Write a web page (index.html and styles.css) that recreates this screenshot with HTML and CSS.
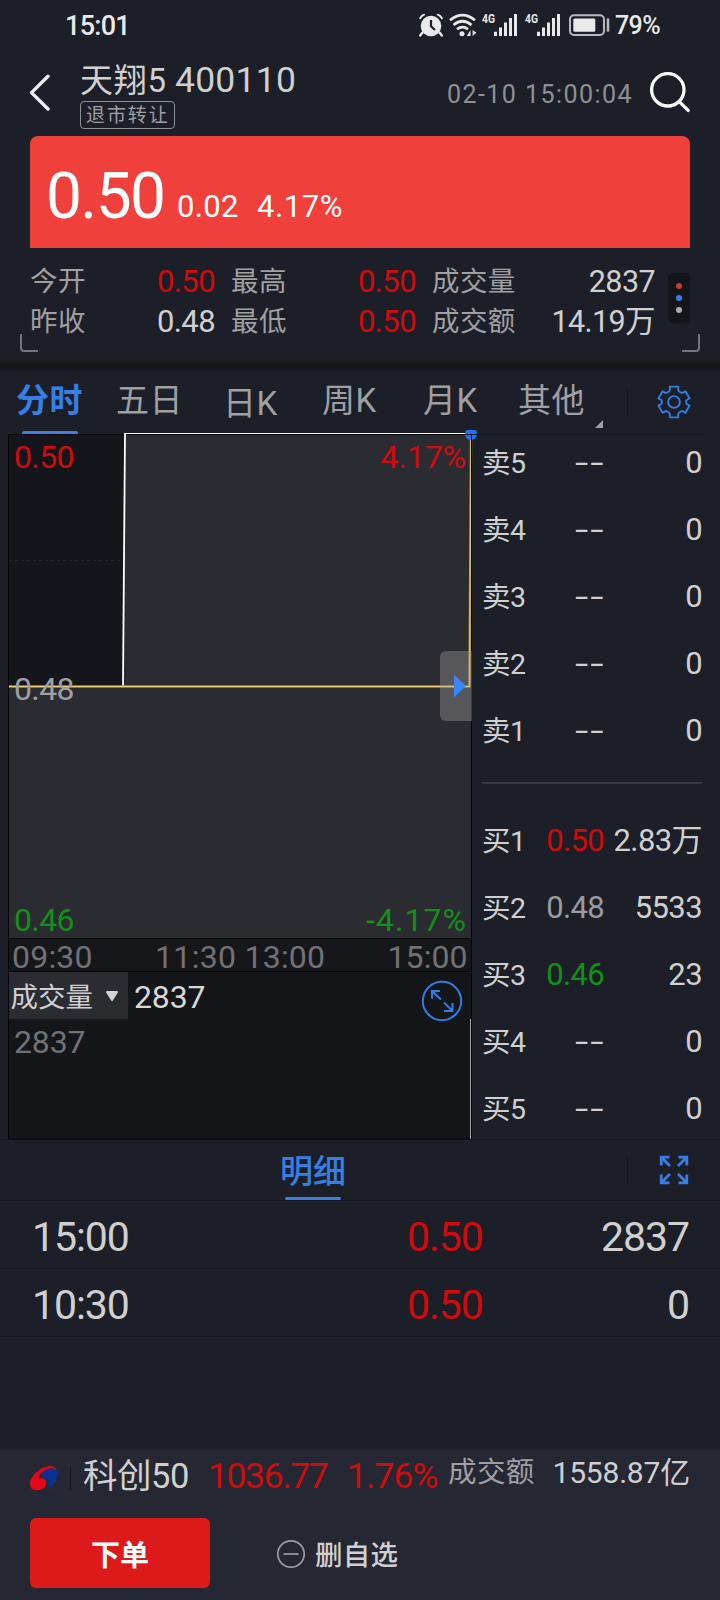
FILE: index.html
```html
<!DOCTYPE html>
<html lang="zh-CN">
<head>
<meta charset="utf-8">
<title>天翔5 400110</title>
<link rel="stylesheet" href="styles.css">
</head>
<body>
<div class="app">
  <div class="status">
    <span class="clock">15:01</span>
    <svg class="status-icons" width="196" height="34" viewBox="0 -4 196 34">
      <g fill="#e9e9ea">
        <circle cx="12" cy="13" r="10.3"/>
        <path d="M3.500 19.500l-2.300 3M20.500 19.500l2.300 3" stroke="#e9e9ea" stroke-width="2.400" stroke-linecap="round"/>
        <path d="M1.200 5.200Q2.600 2.800 5 1.700M18.800 1.700Q21.400 2.800 22.900 5.200" fill="none" stroke="#e9e9ea" stroke-width="2" stroke-linecap="round"/>
        <path d="M12 7v6.200l4 3.800" fill="none" stroke="#1c1f27" stroke-width="2.200"/>
        <path d="M31 7.200Q43.500-3 56 7.200M34.500 12Q43.500 4.500 52.500 12M38 16.300Q43.500 12 49 16.300" fill="none" stroke="#e9e9ea" stroke-width="2.700"/>
        <circle cx="43" cy="20.800" r="2.500"/>
        <path d="M51.500 17v6h-3.700zM53.600 17v6l3.800-3.300z"/>
      </g>
      <g fill="#e9e9ea">
        <text class="net" x="63" y="10.200" textLength="13" lengthAdjust="spacingAndGlyphs">4G</text>
        <path d="M75 18.700h3V23h-3zM80 14.500h3V23h-3zM85 9.500h3V23h-3zM90 5h3v18h-3zM95 1h3v22h-3z"/>
        <text class="net" x="106" y="10.200" textLength="13" lengthAdjust="spacingAndGlyphs">4G</text>
        <path d="M118 18.700h3V23h-3zM123 14.500h3V23h-3zM128 9.500h3V23h-3zM133 5h3v18h-3zM138 1h3v22h-3z"/>
      </g>
      <rect x="151" y="2.300" width="34" height="19.600" rx="4" fill="none" stroke="#b9babd" stroke-width="2"/>
      <rect x="154.300" y="5.500" width="22" height="13.200" rx="1.500" fill="#e9e9ea"/>
      <path d="M189 6.500v11" stroke="#b9babd" stroke-width="2.600" stroke-linecap="round"/>
    </svg>
    <span class="battery">79%</span>
  </div>

  <header class="header">
    <svg class="back" width="22" height="38" viewBox="0 0 22 38"><path d="M19 2.200L2.500 18.600 19 35" fill="none" stroke="#efeff1" stroke-width="3.400" stroke-linecap="round" stroke-linejoin="round"/></svg>
    <div class="stock">
      <div class="name"><span>天翔5</span><span class="code">400110</span></div>
      <span class="tag">退市转让</span>
    </div>
    <span class="stamp">02-10 15:00:04</span>
    <svg class="search" width="42" height="42" viewBox="0 0 42 42"><circle cx="18.800" cy="18.800" r="16.200" fill="none" stroke="#fff" stroke-width="3.300"/><path d="M30.200 30.600l9 8.800" stroke="#fff" stroke-width="3.300" stroke-linecap="round"/></svg>
  </header>

  <div class="price-card"><span class="price">0.50</span><span class="change">0.02</span><span class="change pct">4.17%</span></div>

  <section class="quotes">
    <div class="quote-grid">
      <span class="label">今开</span><span class="val red">0.50</span>
      <span class="label">最高</span><span class="val red">0.50</span>
      <span class="label">成交量</span><span class="val">2837</span>
      <span class="label">昨收</span><span class="val">0.48</span>
      <span class="label">最低</span><span class="val red">0.50</span>
      <span class="label">成交额</span><span class="val">14.19万</span>
    </div>
    <div class="dots"><i class="d-red"></i><i class="d-blue"></i><i class="d-grey"></i></div>
    <i class="corner corner-left"></i><i class="corner corner-right"></i>
  </section>

  <nav class="tabs">
    <span class="tab active">分时</span><span class="tab">五日</span><span class="tab low">日K</span><span class="tab">周K</span><span class="tab">月K</span><span class="tab other">其他</span>
    <i class="more"></i><i class="sep"></i>
    <svg width="34" height="34" viewBox="0 0 34 34" fill="none" stroke="#2f7fe6" stroke-width="1.900" stroke-linejoin="round"><path d="M12.800 1.600h8.400v3.300l.6 1.300 2.500 1.600 1.300.1 2.800-1.700 4.200 7.200-2.900 1.600-.6 1.300v1.400l.6 1.300 2.900 1.600-4.200 7.200-2.800-1.700-1.300.1-2.500 1.600-.6 1.300v3.300h-8.400v-3.300l-.6-1.300-2.500-1.600-1.300-.1-2.800 1.700-4.200-7.200 2.900-1.600.6-1.300v-1.400l-.6-1.300-2.900-1.600 4.200-7.200 2.800 1.700 1.300-.1 2.500-1.600.6-1.300z"/><circle cx="17" cy="17" r="5.900"/></svg>
  </nav>

  <main class="market">
    <svg class="chart" width="474" height="710" viewBox="8 430 474 710">
      <rect x="8.500" y="434.500" width="463" height="504" fill="#2b2c31" stroke="#050507"/>
      <path d="M9 435H124.500L123 686H9z" fill="#15161b"/>
      <path d="M9 560.500H124" stroke="#222329" stroke-dasharray="3 3"/>
      <rect x="8.500" y="938.500" width="463" height="33" fill="#16171b" stroke="#050507"/>
      <rect x="8.500" y="971.500" width="463" height="167.500" fill="#15161a" stroke="#050507"/>
      <path d="M123 686L125 433.500" fill="none" stroke="#fff" stroke-width="1.800"/>
      <path d="M124 433.500H471" stroke="#fff"/>
      <path d="M9 686.500H469.500L471 435" fill="none" stroke="#b3912b" stroke-width="2.400"/>
      <path d="M9 686.500H469.500L471 435" fill="none" stroke="#ead06f" stroke-width="1"/>
      <circle cx="471" cy="434" r="6" fill="#1f72f3"/>
      <path d="M471.500 434v505" stroke="#050507"/><path d="M465 434.500h17" stroke="#14161b"/>
      <path d="M472 651H446a6 6 0 0 0-6 6v58a6 6 0 0 0 6 6h26z" fill="#a3a1a5" fill-opacity=".36"/>
      <path d="M454 674.500L466 686l-12 11.500z" fill="#3a86f7"/>
      <g class="chart-text">
        <text x="14" y="468.300" textLength="60.500" fill="#d00b0d">0.50</text>
        <text x="380.500" y="468.300" textLength="85.500" fill="#d00b0d">4.17%</text>
        <text x="14" y="700.300" textLength="60.500" fill="#a0a0a3">0.48</text>
        <text x="14" y="931" textLength="60.500" fill="#139018">0.46</text>
        <text x="366" y="931" textLength="100" fill="#139018">-4.17%</text>
        <g fill="#727276">
          <text x="12" y="967.800" textLength="80.500">09:30</text>
          <text x="155" y="967.800" textLength="81">11:30</text>
          <text x="244.500" y="967.800" textLength="80.500">13:00</text>
          <text x="387.500" y="967.800" textLength="80">15:00</text>
          <text x="14" y="1053" textLength="71.500">2837</text>
        </g>
        <rect x="9" y="972" width="119" height="47" fill="#2b2c31"/>
        <text class="vol" x="10.500" y="1007.300" fill="#d0d0d2">成交量</text>
        <path d="M107 992h10l-5 8z" fill="#d4d4d5" stroke="#d4d4d5" stroke-width="2" stroke-linejoin="round"/>
        <text x="134" y="1008" textLength="71.500" fill="#d9d9da">2837</text>
      </g>
      <g fill="none" stroke="#307ee0" stroke-width="2"><circle cx="442" cy="1001" r="19.200"/><path d="M432 998.500V991h8M432 991l9 8.500M444 1002.500l8.500 8.500M452.500 1003v8h-8.500"/></g>
      <path d="M470.500 1019v120" stroke="#a4a4a7"/>
    </svg>
    <div class="book">
      <div class="row"><span class="side">卖5</span><span class="p dash">--</span><span class="q">0</span></div>
      <div class="row"><span class="side">卖4</span><span class="p dash">--</span><span class="q">0</span></div>
      <div class="row"><span class="side">卖3</span><span class="p dash">--</span><span class="q">0</span></div>
      <div class="row"><span class="side">卖2</span><span class="p dash">--</span><span class="q">0</span></div>
      <div class="row"><span class="side">卖1</span><span class="p dash">--</span><span class="q">0</span></div>
      <div class="split"></div>
      <div class="row"><span class="side">买1</span><span class="p red">0.50</span><span class="q">2.83万</span></div>
      <div class="row"><span class="side">买2</span><span class="p grey">0.48</span><span class="q">5533</span></div>
      <div class="row"><span class="side">买3</span><span class="p green">0.46</span><span class="q">23</span></div>
      <div class="row"><span class="side">买4</span><span class="p dash">--</span><span class="q">0</span></div>
      <div class="row"><span class="side">买5</span><span class="p dash">--</span><span class="q">0</span></div>
    </div>
  </main>

  <section class="detail">
    <div class="detail-head">
      <span class="detail-tab">明细</span><i class="sep"></i>
      <svg width="30" height="30" viewBox="0 0 30 30" fill="none" stroke="#3580e6" stroke-width="2.800"><path d="M2.200 10.500V2.200h8.300M2.200 2.200L11 11M19.500 2.200h8.300v8.300M27.800 2.200L19 11M2.200 19.500v8.300h8.300M2.200 27.800L11 19M27.800 19.500v8.300h-8.300M27.800 27.800L19 19"/></svg>
    </div>
    <div class="tick"><span class="t-time">15:00</span><span class="t-price">0.50</span><span class="t-vol">2837</span></div>
    <div class="tick"><span class="t-time">10:30</span><span class="t-price">0.50</span><span class="t-vol">0</span></div>
  </section>

  <footer class="footer">
    <div class="index">
      <svg class="logo" width="28" height="28" viewBox="0 0 28 28"><rect width="28" height="28" fill="#272833"/><path d="M27 6Q23-.5 14 3.500C5 7.500 0 14 0 20c0 5 4 7 9 6 6-1 8-5 7-9-.8-3-4-3-7-2.500Q9 9 17 5.500 23 3 27 6z" fill="#e50719"/><path d="M27.500 8C25 2 17 4.500 13 8c-3 3-2 5.500 2 6.500 5 1.500 5 6 1 10.500 6-1.500 13-10 11.500-17z" fill="#073491"/></svg>
      <i class="index-sep"></i>
      <span class="index-name">科创50</span><span class="index-val">1036.77</span><span class="index-pct">1.76%</span><span class="index-label">成交额</span><span class="index-sum">1558.87亿</span>
    </div>
    <div class="actions">
      <button class="order">下单</button>
      <span class="remove"><svg width="30" height="30" viewBox="0 0 30 30" fill="none" stroke="#9c9ca2" stroke-width="1.700"><circle cx="15" cy="15" r="13.200"/><path d="M7.500 15h15"/></svg><span class="remove-text">删自选</span></span>
    </div>
  </footer>
</div>
</body>
</html>
```

FILE: styles.css
```css
* { box-sizing: border-box; }
body { margin: 0; background: #1c1f27; }
.app {
  width: 720px; height: 1600px; display: flex; flex-direction: column; overflow: hidden;
  font-family: Roboto, "Noto Sans CJK SC", sans-serif; color: #d0d0d1; background: #1c1f27;
  white-space: nowrap;
}
i { display: block; }
.red { color: #d00b0d; }
.green { color: #139018; }
.grey { color: #9b9b9f; }

.status { height: 50px; display: flex; align-items: center; padding: 1px 58px 0 65px; color: #e9e9ea; }
.clock { font-size: 27px; line-height: 30px; font-weight: 500; letter-spacing: -.7px; }
.status-icons { margin-left: auto; }
.net { font: 700 12.500px Roboto, sans-serif; }
.battery { width: 47px; font-size: 25px; line-height: 30px; font-weight: 500; letter-spacing: -.6px; }

.header { height: 86px; display: flex; padding-left: 29px; }
.back { margin-top: 24px; }
.stock { margin-left: 29px; padding-top: 10px; }
.name { display: flex; gap: 8px; font-size: 33px; line-height: 41px; }
.name span { letter-spacing: .8px; }
.name .code { font-size: 35.500px; letter-spacing: .25px; }
.tag {
  display: block; width: 95px; height: 28px; padding-left: 5px; border: 1px solid #8f9094; border-radius: 4px;
  font-size: 19px; line-height: 28px; letter-spacing: 1.900px; color: #9fa0a3;
}
.stamp { margin: 30px 16px 0 auto; font-size: 25px; line-height: 30px; letter-spacing: 1.450px; color: #8f9094; }
.search { margin: 21px 29px 0 0; }

.price-card { height: 112px; margin: 0 30px; padding: 0 16px; display: flex; border-radius: 8px 8px 0 0; background: #ef403c; color: #fff; }
.price { font-size: 64px; line-height: 122px; letter-spacing: -1.600px; width: 130px; }
.change { font-size: 31px; line-height: 141px; letter-spacing: .3px; width: 81px; margin-left: 1px; }
.pct { margin-left: -1px; letter-spacing: .6px; }

.quotes { position: relative; height: 122px; padding: 13px 30px 0; display: flex; border-bottom: 8px solid #16171b; }
.quote-grid { width: 626px; display: grid; grid-template-columns: 63px 138px 63px 138px 87px 137px; grid-template-rows: 40px 40px; }
.label { font-size: 27.500px; line-height: 41px; letter-spacing: .4px; color: #a0a0a3; }
.val { font-size: 31px; line-height: 41px; letter-spacing: -.6px; text-align: right; }
.val:nth-child(4n+2), .val:nth-child(4n) { padding-right: 16px; }
.val:nth-child(6n) { padding-right: 1px; font-size: 30.500px; }
.dots { width: 22px; height: 50px; margin: 12px 0 0 12px; border-radius: 5px; background: #141519; display: flex; flex-direction: column; align-items: center; justify-content: center; gap: 6px; }
.dots i { width: 6px; height: 6px; border-radius: 50%; background: #adadb0; }
.dots .d-red { background: #c5402f; }
.dots .d-blue { background: #3180ee; }
.corner { position: absolute; top: 86px; width: 18px; height: 18px; border-bottom: 2px solid #74757a; }
.corner-left { left: 20px; border-left: 2px solid #74757a; border-bottom-left-radius: 4px; }
.corner-right { right: 20px; border-right: 2px solid #74757a; border-bottom-right-radius: 4px; }

.tabs { height: 64px; flex: none; display: flex; padding-left: 16px; font-size: 33px; line-height: 62px; letter-spacing: .5px; color: #a0a0a3; }
.tab { width: 100px; }
.tab.active { position: relative; color: #3580e6; font-weight: 700; }
.tab.active::after { content: ""; position: absolute; left: 6px; top: 61px; width: 56px; height: 3px; border-radius: 2px 2px 0 0; background: #3d7fdc; }
.tab:nth-child(2) { width: 107px; }
.tab.low { padding-top: 3px; width: 99px; }
.tab:nth-child(4) { width: 101px; }
.tab:nth-child(5) { width: 95px; }
.tab.other { width: 77px; }
.more { margin-top: 50px; border-left: 8px solid transparent; border-bottom: 8px solid #a0a0a3; height: 8px; }
.sep { width: 1px; height: 30px; background: #14161b; }
.tabs .sep { margin: 17px 0 0 24px; }
.tabs svg { margin: 15px 0 0 29px; }

.market { height: 706px; flex: none; display: flex; padding-left: 8px; border-bottom: 1px solid #14161b; }
.chart { display: block; flex: none; margin-top: -4px; position: relative; }
.chart-text text { font: 32px Roboto, sans-serif; }
.chart-text .vol { font: 27.500px "Noto Sans CJK SC", sans-serif; }
.book { width: 220px; border-top: 1px solid #14161b; }
.row { height: 67px; display: flex; line-height: 56px; }
.side { width: 55px; font-size: 28.500px; letter-spacing: -.5px; line-height: 57px; }
.p { width: 67px; text-align: right; font-size: 31px; letter-spacing: -.7px; }
.p.dash { font-size: 31px; display: flex; justify-content: flex-end; transform: scaleX(1.550) translateX(1px); transform-origin: right; letter-spacing: 1.300px; }
.q { flex: 1; text-align: right; font-size: 31px; letter-spacing: -.6px; }
.split { height: 43px; border-top: 2px solid #363840; margin-top: 12px; margin-bottom: -12px; }

.detail { height: 310px; flex: none; }
.detail-head { height: 61px; display: flex; border-bottom: 1px solid #14161b; }
.detail-tab { position: relative; margin-left: 280px; width: 66px; font-size: 33px; line-height: 64px; font-weight: 500; color: #3580e6; }
.detail-tab::after { content: ""; position: absolute; left: 5px; top: 57px; width: 56px; height: 3px; border-radius: 2px; background: #3d7fdc; }
.detail-head .sep { margin: 15px 0 0 281px; }
.detail-head svg { margin: 15px 0 0 31px; }
.tick { height: 68px; padding: 2px 31px 0 32px; display: flex; border-bottom: 1px solid #14161b; font-size: 41px; line-height: 69px; letter-spacing: -1.050px; }
.t-time { width: 375px; }
.t-price { color: #d00b0d; }
.t-vol { margin-left: auto; }

.footer { height: 150px; flex: none; background: #252733; }
.index { height: 68px; display: flex; padding: 0 30px; line-height: 52px; }
.logo { margin-top: 14px; }
.index-sep { width: 1px; height: 24px; margin: 16px 12px 0; background: #171922; }
.index-name { width: 125px; font-size: 34.500px; letter-spacing: -.5px; }
.index-val { width: 139px; font-size: 35.500px; line-height: 53px; color: #d00b0d; letter-spacing: -1.400px; }
.index-pct { width: 101px; font-size: 35.500px; line-height: 53px; color: #d00b0d; letter-spacing: -.9px; }
.index-label { font-size: 28.500px; line-height: 46px; letter-spacing: .4px; color: #a0a0a3; }
.index-sum { margin-left: auto; font-size: 30px; line-height: 45px; letter-spacing: -.2px; }
.actions { display: flex; padding-left: 30px; }
.order { width: 180px; height: 70px; padding: 0; border: 0; border-radius: 6px; background: #dd1a1a; color: #fff; font: 700 29px "Noto Sans CJK SC", sans-serif; }
.remove { display: flex; align-items: center; gap: 9px; margin-left: 66px; height: 72px; font-size: 27.500px; line-height: 36px; letter-spacing: .3px; font-weight: 500; }
.remove-text { padding-top: 3px; }
```
